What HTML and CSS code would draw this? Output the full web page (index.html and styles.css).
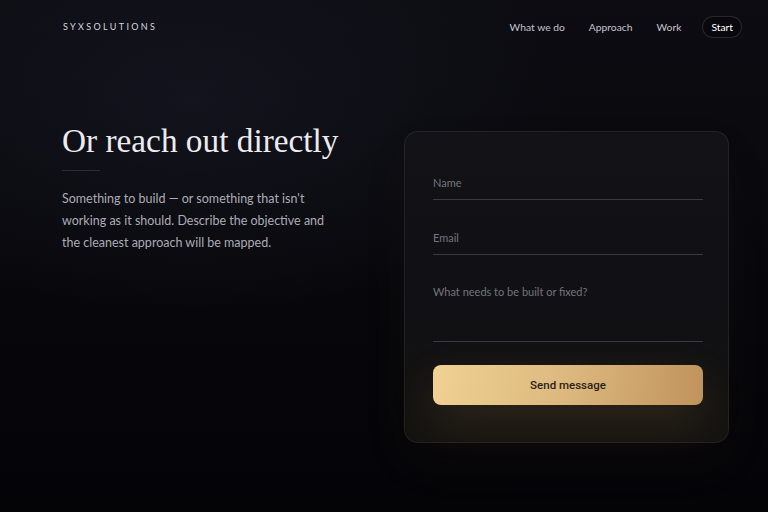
FILE: index.html
```html
<!DOCTYPE html>
<html lang="en">
<head>
    <meta charset="UTF-8">
    <meta name="viewport" content="width=device-width, initial-scale=1.0">
    <title>SYXSOLUTIONS</title>
    <link rel="stylesheet" href="styles.css">
</head>
<body>

    <header class="topbar">
        <div class="logo">SYXSOLUTIONS</div>
        <nav class="nav">
            <a href="#">What we do</a>
            <a href="#">Approach</a>
            <a href="#">Work</a>
            <a href="#" class="nav-start">Start</a>
        </nav>
    </header>

    <main class="contact">
        <section class="intro">
            <h1>Or reach out directly</h1>
            <div class="rule"></div>
            <p>Something to build — or something that isn't working as it should. Describe the objective and the cleanest approach will be mapped.</p>
        </section>

        <form class="card">
            <input type="text" placeholder="Name">
            <input type="email" placeholder="Email">
            <textarea placeholder="What needs to be built or fixed?"></textarea>
            <button type="button">Send message</button>
        </form>
    </main>

</body>
</html>
```

FILE: styles.css
```css
/* Reset default styles */
* {
    margin: 0;
    padding: 0;
    box-sizing: border-box;
}

html, body {
    height: 100%;
}

body {
    font-family: Lato, "Open Sans", sans-serif;
    color: #c9c9d1;
    background-color: #06060a;
    background-image:
        radial-gradient(ellipse 70% 60% at 25% 20%, rgba(28, 28, 42, 0.5), transparent 70%),
        linear-gradient(180deg, #0c0c12 0%, #07070b 60%, #040407 100%);
    overflow: hidden;
}

.topbar {
    display: flex;
    justify-content: space-between;
    align-items: center;
    height: 37px;
    padding: 16px 26px 0 63px;
}

.logo {
    font-size: 9px;
    letter-spacing: 2.35px;
    color: #d6d6de;
}

.nav {
    display: flex;
    align-items: center;
    gap: 24px;
}

.nav a {
    color: #c4c4cc;
    text-decoration: none;
    font-size: 10.3px;
}

.nav a.nav-start {
    color: #fff;
    padding: 4px 8px;
    margin-left: -3px;
    border: 1px solid rgba(255, 255, 255, 0.12);
    border-radius: 12px;
    background-color: rgba(0, 0, 0, 0.25);
}

.contact {
    display: grid;
    grid-template-columns: 1fr 325px;
    align-items: start;
    gap: 40px;
    padding: 85px 39px 0 62px;
}

.intro h1 {
    font-family: "Liberation Serif", serif;
    font-weight: normal;
    font-size: 33.3px;
    line-height: 38px;
    color: #ececf0;
}

.rule {
    width: 38px;
    height: 1px;
    margin: 10px 0 17px;
    background-color: rgba(190, 160, 120, 0.2);
}

.intro p {
    max-width: 268px;
    font-size: 12.5px;
    line-height: 22px;
    color: #acacb5;
}

.card {
    display: flex;
    flex-direction: column;
    margin-top: 9px;
    padding: 42px 25px 37px 28px;
    border: 1px solid rgba(255, 255, 255, 0.07);
    border-radius: 14px;
    background: linear-gradient(180deg, #121217 0%, #111114 60%, #141310 100%);
    box-shadow: 0 20px 50px rgba(120, 90, 40, 0.06);
}

.card input,
.card textarea {
    display: block;
    width: 100%;
    font-family: Lato, "Open Sans", sans-serif;
    font-size: 11px;
    line-height: 16px;
    color: #ddd;
    background: transparent;
    border: none;
    border-bottom: 1px solid #3a3a40;
    outline: none;
    resize: none;
}

.card input {
    height: 26px;
    padding: 0 0 9px;
    margin-bottom: 29px;
}

.card textarea {
    height: 58px;
    padding: 0;
    margin-bottom: 23px;
}

.card ::placeholder {
    color: #74747c;
}

.card button {
    height: 40px;
    border: none;
    border-radius: 8px;
    font-family: Roboto, sans-serif;
    font-weight: 500;
    font-size: 11.5px;
    color: #2a2218;
    cursor: pointer;
    background: linear-gradient(100deg, #f0d293 0%, #dcb87e 50%, #bf935c 100%);
    box-shadow: 0 16px 44px rgba(200, 150, 80, 0.16);
}
```
